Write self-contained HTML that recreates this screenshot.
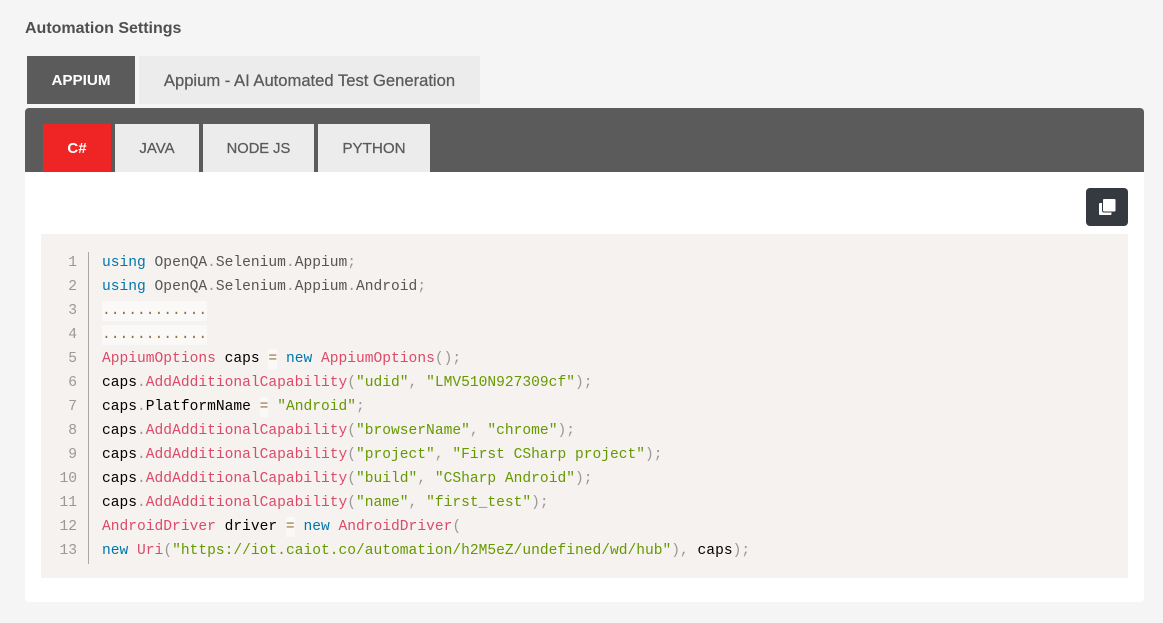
<!DOCTYPE html>
<html>
<head>
<meta charset="utf-8">
<style>
html,body{margin:0;padding:0;}
body{width:1163px;height:623px;background:#f5f5f5;position:relative;overflow:hidden;font-family:"Liberation Sans",sans-serif;color:#555;}
.a{position:absolute;}
.title{left:25px;top:19px;font-size:16px;font-weight:bold;line-height:20px;color:#4f4f4f;white-space:nowrap;}
.tab{position:absolute;text-align:center;font-size:15.2px;line-height:50px;height:48px;background:#ececec;color:#5a5a5a;white-space:nowrap;-webkit-text-stroke:.25px #5a5a5a;}
.panel{left:25px;top:108px;width:1119px;height:494px;background:#fff;border-radius:4px;}
.bar{left:25px;top:108px;width:1119px;height:64px;background:#5b5b5b;border-radius:4px 4px 0 0;}
.code{left:41px;top:234px;width:1087px;height:344px;background:#f5f2f0;}
.rule{left:88px;top:252px;width:1px;height:312px;background:#a8a8a8;}
.ln{position:absolute;left:41px;width:36px;text-align:right;font:14.6px/24px "Liberation Mono",monospace;color:#999;}
.l{position:absolute;left:102px;font:14.6px/24px "Liberation Mono",monospace;color:#000;white-space:pre;height:24px;}
.k{color:#07a;}.f{color:#dd4a68;}.s{color:#690;}.p{color:#999;}
.o{color:#9a6e3a;background:rgba(255,255,255,.5);padding:2px 0;}
.btn{left:1086px;top:188px;width:42px;height:38px;background:#343a40;border-radius:4px;}
</style>
</head>
<body>
<div class="a title">Automation Settings</div>
<div class="tab" style="left:27px;top:56px;width:108px;background:#5b5b5b;color:#fff;font-weight:bold;font-size:15.2px;-webkit-text-stroke:0;">APPIUM</div>
<div class="tab" style="left:139px;top:56px;width:341px;font-size:16.6px;">Appium - AI Automated Test Generation</div>
<div class="a panel"></div>
<div class="a bar"></div>
<div class="tab" style="left:43px;top:124px;width:68px;background:#ef2525;color:#fff;font-weight:bold;font-size:15px;-webkit-text-stroke:0;">C#</div>
<div class="tab" style="left:115px;top:124px;width:84px;font-size:15px;">JAVA</div>
<div class="tab" style="left:203px;top:124px;width:111px;font-size:14.7px;">NODE JS</div>
<div class="tab" style="left:318px;top:124px;width:112px;font-size:15.2px;">PYTHON</div>
<div class="a btn">
<svg width="42" height="38" viewBox="0 0 42 38" style="display:block"><rect x="13" y="15" width="12.5" height="12" rx="1" fill="#fff"/><rect x="16.5" y="10.5" width="13.5" height="13.5" rx="1.5" fill="#fff" stroke="#343a40" stroke-width="1"/></svg>
</div>
<div class="a code"></div>
<div class="a rule"></div>
<div class="ln" style="top:251px">1</div>
<div class="ln" style="top:275px">2</div>
<div class="ln" style="top:299px">3</div>
<div class="ln" style="top:323px">4</div>
<div class="ln" style="top:347px">5</div>
<div class="ln" style="top:371px">6</div>
<div class="ln" style="top:395px">7</div>
<div class="ln" style="top:419px">8</div>
<div class="ln" style="top:443px">9</div>
<div class="ln" style="top:467px">10</div>
<div class="ln" style="top:491px">11</div>
<div class="ln" style="top:515px">12</div>
<div class="ln" style="top:539px">13</div>
<div class="l" style="top:251px;color:#555"><span class="k">using</span> OpenQA<span class="p">.</span>Selenium<span class="p">.</span>Appium<span class="p">;</span></div>
<div class="l" style="top:275px;color:#555"><span class="k">using</span> OpenQA<span class="p">.</span>Selenium<span class="p">.</span>Appium<span class="p">.</span>Android<span class="p">;</span></div>
<div class="l" style="top:299px"><span class="o">............</span></div>
<div class="l" style="top:323px"><span class="o">............</span></div>
<div class="l" style="top:347px"><span class="f">AppiumOptions</span> caps <span class="o">=</span> <span class="k">new</span> <span class="f">AppiumOptions</span><span class="p">();</span></div>
<div class="l" style="top:371px">caps<span class="p">.</span><span class="f">AddAdditionalCapability</span><span class="p">(</span><span class="s">"udid"</span><span class="p">,</span> <span class="s">"LMV510N927309cf"</span><span class="p">);</span></div>
<div class="l" style="top:395px">caps<span class="p">.</span>PlatformName <span class="o">=</span> <span class="s">"Android"</span><span class="p">;</span></div>
<div class="l" style="top:419px">caps<span class="p">.</span><span class="f">AddAdditionalCapability</span><span class="p">(</span><span class="s">"browserName"</span><span class="p">,</span> <span class="s">"chrome"</span><span class="p">);</span></div>
<div class="l" style="top:443px">caps<span class="p">.</span><span class="f">AddAdditionalCapability</span><span class="p">(</span><span class="s">"project"</span><span class="p">,</span> <span class="s">"First CSharp project"</span><span class="p">);</span></div>
<div class="l" style="top:467px">caps<span class="p">.</span><span class="f">AddAdditionalCapability</span><span class="p">(</span><span class="s">"build"</span><span class="p">,</span> <span class="s">"CSharp Android"</span><span class="p">);</span></div>
<div class="l" style="top:491px">caps<span class="p">.</span><span class="f">AddAdditionalCapability</span><span class="p">(</span><span class="s">"name"</span><span class="p">,</span> <span class="s">"first_test"</span><span class="p">);</span></div>
<div class="l" style="top:515px"><span class="f">AndroidDriver</span> driver <span class="o">=</span> <span class="k">new</span> <span class="f">AndroidDriver</span><span class="p">(</span></div>
<div class="l" style="top:539px"><span class="k">new</span> <span class="f">Uri</span><span class="p">(</span><span class="s">"https://iot.caiot.co/automation/h2M5eZ/undefined/wd/hub"</span><span class="p">),</span> caps<span class="p">);</span></div>
</body>
</html>
